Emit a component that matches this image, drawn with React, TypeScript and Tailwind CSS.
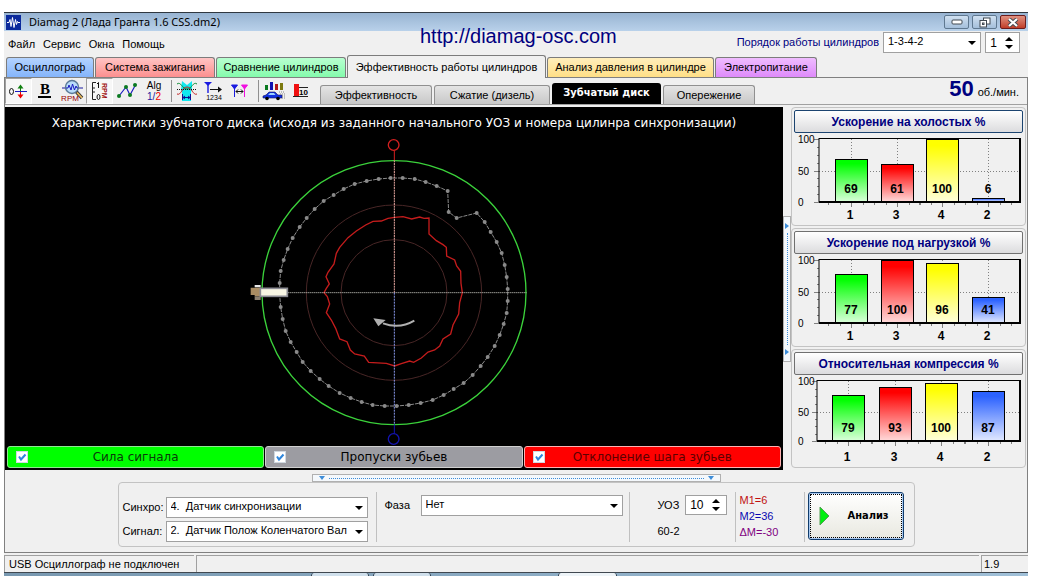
import React, { useState } from "react";

const menuItems = ["Файл", "Сервис", "Окна", "Помощь"];

const mainTabs = [
  { label: "Осциллограф", style: "w-[88px] bg-linear-to-b from-[#b4d3ff] to-[#84b4fa]" },
  { label: "Система зажигания", style: "w-[120px] bg-linear-to-b from-[#ffc4c4] to-[#fb8f8f]" },
  { label: "Сравнение цилиндров", style: "w-[130px] bg-linear-to-b from-[#b8ffd0] to-[#84fbac]" },
  { label: "Эффективность работы цилиндров", style: "w-[199px]", active: true },
  { label: "Анализ давления в цилиндре", style: "w-[167px] bg-linear-to-b from-[#ffeebb] to-[#ffdf86]" },
  { label: "Электропитание", style: "w-[102px] bg-linear-to-b from-[#efbcff] to-[#de8afa]" },
];

const discTabs = [
  { label: "Эффективность", style: "w-[112px]" },
  { label: "Сжатие (дизель)", style: "w-[116px]" },
  { label: "Зубчатый диск", style: "w-[109px]", active: true },
  { label: "Опережение", style: "w-[92px]" },
];

function WaveIcon() {
  return (
    <svg width="15" height="15" viewBox="0 0 15 15" aria-hidden="true">
      <rect width="15" height="15" fill="#0b2a9c" />
      <path d="M1 7.5h2l1-3 1 7 1.5-9 1.5 10 1.5-8 1 5 1-3 .5 1H14" stroke="#fff" fill="none" strokeWidth="1" />
    </svg>
  );
}

function OffsetIcon() {
  return (
    <svg width="22" height="22" viewBox="0 0 22 22" aria-hidden="true">
      <ellipse cx="3.5" cy="11.5" rx="2" ry="3" fill="none" stroke="#111" />
      <path d="M7 11.5h12" stroke="#1a1ac0" />
      <path d="M12.5 11V7" stroke="#108010" />
      <path d="M9.5 8.5l3-4 3 4z" fill="#108010" />
      <path d="M12.5 12v4" stroke="#e00" />
      <path d="M9.5 14.5l3 4 3-4z" fill="#e00" />
    </svg>
  );
}

function BoldIcon() {
  return (
    <svg width="22" height="22" viewBox="0 0 22 22" aria-hidden="true">
      <text x="10" y="14" textAnchor="middle" fontSize="15" fontWeight="700" fontFamily="Liberation Serif, serif">B</text>
      <path d="M3 17h13" stroke="#000" strokeWidth="2" />
    </svg>
  );
}

function RpmIcon() {
  return (
    <svg width="24" height="24" viewBox="0 0 24 24" aria-hidden="true">
      <path d="M1 9h21" stroke="#1a1aa0" />
      <circle cx="11" cy="8" r="6.5" fill="#b9dcfa" stroke="#5a7896" strokeWidth="1.4" />
      <path d="M5 9h2l1-3 2 5 1.5-6 2 6L15 7l1 2h1" stroke="#1a1ac0" fill="none" />
      <path d="M15.5 13l5.5 6" stroke="#333" strokeWidth="3.4" />
      <path d="M16 13.500l5 5.500" stroke="#e8b95c" strokeWidth="1.800" />
      <text x="9" y="22" textAnchor="middle" fontSize="8" fill="#900" fontFamily="Liberation Sans, sans-serif">RPM</text>
    </svg>
  );
}

function RangeIcon() {
  return (
    <svg width="22" height="22" viewBox="0 0 22 22" aria-hidden="true">
      <path d="M7 2.500H3.500v17H7M4 8h2M4 12h2" stroke="#222" fill="none" />
      <path d="M8 4l1.500-1.500V8" stroke="#111" fill="none" />
      <ellipse cx="9.500" cy="17" rx="1.500" ry="2.500" fill="none" stroke="#111" />
      <text transform="translate(13 3) rotate(90)" fontSize="7" fontWeight="700" fill="#a01010" fontFamily="Liberation Sans, sans-serif">RPM</text>
    </svg>
  );
}

function LinePointsIcon() {
  return (
    <svg width="22" height="22" viewBox="0 0 22 22" aria-hidden="true">
      <path d="M3 16l7-9 4 8 6-11" stroke="#1a1ac0" strokeWidth="1.200" fill="none" />
      <g fill="#0a7a20">
        <circle cx="3" cy="16" r="2" />
        <circle cx="10" cy="7" r="2" />
        <circle cx="14" cy="15" r="2" />
        <circle cx="19" cy="5" r="2" />
      </g>
    </svg>
  );
}

function AlgIcon() {
  return (
    <svg width="22" height="22" viewBox="0 0 22 22" fontFamily="Liberation Sans, sans-serif" aria-hidden="true">
      <text x="11" y="9" textAnchor="middle" fontSize="10">Alg</text>
      <text x="11" y="20" textAnchor="middle" fontSize="10" fill="#1a1aa0">
        1/<tspan fill="#e00">2</tspan>
      </text>
    </svg>
  );
}

function CompareIcon() {
  return (
    <svg width="22" height="22" viewBox="0 0 22 22" aria-hidden="true">
      <path d="M6 1l5 4 5-4v9l-1 2v9H6v-9l-1-2z" fill="#12e8f0" />
      <path d="M1 4c4-3 5 5 10 5s6-8 10-5" stroke="#0a8a30" fill="none" />
      <path d="M1 14c4 2 5-7 10-7s6 9 10 7" stroke="#c02020" fill="none" />
      <path d="M1 9.500h20" stroke="#111" strokeDasharray="1 1" />
      <path d="M6.500 14v6M14.500 14v6M7 17.500h7M9 16l-2 1.500L9 19M12 16l2 1.500-2 1.500" stroke="#101090" fill="none" />
    </svg>
  );
}

function MarkersNumberedIcon() {
  return (
    <svg width="22" height="22" viewBox="0 0 22 22" aria-hidden="true">
      <path d="M1 2h8L5 6z" fill="#1a1ae0" />
      <path d="M5 3v10" stroke="#1a1ae0" strokeWidth="1.400" />
      <path d="M7 9.500h10" stroke="#111" />
      <path d="M15 6.500l4 3-4 3z" fill="#111" />
      <text x="11" y="20" textAnchor="middle" fontSize="7" fontFamily="Liberation Sans, sans-serif">1234</text>
    </svg>
  );
}

function MarkersIcon() {
  return (
    <svg width="22" height="22" viewBox="0 0 22 22" aria-hidden="true">
      <path d="M1.500 5h6L4.500 9zM4.500 6v11" fill="#1a1ae0" stroke="#1a1ae0" />
      <path d="M11.500 5h6l-3 4zM14.500 6v11" fill="#f010e0" stroke="#f010e0" />
      <path d="M6 11.500h7M8 9.500l-2 2 2 2M11 9.500l2 2-2 2" stroke="#111" fill="none" />
    </svg>
  );
}

function CarChartIcon() {
  return (
    <svg width="24" height="22" viewBox="0 0 24 22" aria-hidden="true">
      <path d="M3 5h3v5H3z" fill="#0a7a20" />
      <path d="M8 2h3v8H8z" fill="#1010b0" />
      <path d="M13 4h3v6h-3z" fill="#b01818" />
      <path d="M18 3h3v7h-3z" fill="#7c7a10" />
      <path d="M1 16l3-1 3-3h6l3 3h4v3H1z" fill="#1030e0" stroke="#101060" strokeWidth=".6" />
      <path d="M8 13h4l1.500 2H6z" fill="#9bd0ff" />
      <circle cx="5" cy="18.500" r="1.800" />
      <circle cx="16" cy="18.500" r="1.800" />
      <path d="M17 12h5M18 14h5M20 16h3M20 18h3" stroke="#888" strokeDasharray="1 1" />
    </svg>
  );
}

function TenIcon() {
  return (
    <svg width="22" height="22" viewBox="0 0 22 22" aria-hidden="true">
      <path d="M4 4h5v12H4z" fill="#f01010" />
      <path d="M3 16.500h15M9 7.500h9" stroke="#222" />
      <text x="13.500" y="15" textAnchor="middle" fontSize="8" fontWeight="700" fontFamily="Liberation Sans, sans-serif">10</text>
    </svg>
  );
}

type Tool = { name: string; icon: () => React.JSX.Element; pressed?: boolean; separated?: boolean };

const tools: Tool[] = [
  { name: "Смещение", icon: OffsetIcon, pressed: true },
  { name: "Жирные линии", icon: BoldIcon },
  { name: "Обороты", icon: RpmIcon },
  { name: "Шкала оборотов", icon: RangeIcon, pressed: true },
  { name: "Точки", icon: LinePointsIcon },
  { name: "Алгоритм", icon: AlgIcon },
  { name: "Сравнение", icon: CompareIcon, separated: true },
  { name: "Нумерация маркеров", icon: MarkersNumberedIcon },
  { name: "Маркеры", icon: MarkersIcon },
  { name: "Диаграмма", icon: CarChartIcon, separated: true },
  { name: "Десять", icon: TenIcon },
];

function Combo({ id, options, className }: { id: string; options: string[]; className: string }) {
  return (
    <div className={"relative " + className}>
      <select id={id} className="h-full w-full appearance-none rounded-none border border-[#a0a0a0] bg-white pr-4 pb-0.5 pl-1 text-black outline-none">
        {options.map((o) => (
          <option key={o}>{o}</option>
        ))}
      </select>
      <svg className="pointer-events-none absolute inset-y-0 right-[5px] my-auto" width="8" height="4" viewBox="0 0 8 4" aria-hidden="true">
        <path d="M0 0h8L4 4z" />
      </svg>
    </div>
  );
}

function Spinner({ id, initial, label, className }: { id: string; initial: number; label?: string; className: string }) {
  const [value, setValue] = useState(initial);
  return (
    <div className={"flex items-center border border-[#a0a0a0] bg-white pr-1.5 text-xs " + className}>
      <input
        id={id}
        type="number"
        aria-label={label}
        value={value}
        onChange={(e) => setValue(Number(e.target.value))}
        className="w-0 min-w-0 flex-1 [appearance:textfield] bg-transparent pr-2 text-right outline-none [&::-webkit-inner-spin-button]:appearance-none"
      />
      <div className="flex flex-col gap-1">
        <button aria-label="Больше" onClick={() => setValue(value + 1)}>
          <svg className="block" width="8" height="4" viewBox="0 0 8 4"><path d="M0 4h8L4 0z" /></svg>
        </button>
        <button aria-label="Меньше" onClick={() => setValue(value - 1)}>
          <svg className="block" width="8" height="4" viewBox="0 0 8 4"><path d="M0 0h8L4 4z" /></svg>
        </button>
      </div>
    </div>
  );
}

const teeth: [number, number][] = [
  [120, 519], [123, 483], [132, 450], [144, 417], [159, 384], [180, 351], [201, 324], [225, 297], [252, 273], [282, 255],
  [312, 237], [345, 222], [381, 213], [417, 207], [453, 204], [489, 204], [525, 207], [558, 216], [591, 228], [624, 243],
  [627, 306], [651, 324], [711, 309], [735, 336], [753, 366], [771, 396], [786, 429], [795, 465], [801, 501], [804, 537],
  [804, 573], [801, 609], [792, 642], [780, 675], [765, 708], [744, 741], [723, 768], [699, 795], [672, 819], [642, 837],
  [612, 855], [579, 870], [543, 879], [507, 885], [471, 888], [435, 888], [399, 885], [366, 876], [333, 864], [300, 849],
  [267, 828], [240, 807], [213, 783], [189, 756], [171, 726], [153, 696], [138, 663], [129, 627], [123, 591], [120, 555],
];

const deviation: [number, number][] = [
  [465, 322], [490, 320], [516, 327], [540, 321], [553, 325], [568, 324], [568, 372], [590, 392], [610, 404], [620, 412],
  [621, 438], [645, 450], [651, 468], [663, 484], [664, 520], [668, 548], [660, 578], [657, 612], [640, 645], [633, 672],
  [610, 687], [600, 708], [585, 720], [565, 726], [545, 744], [522, 757], [510, 753], [485, 761], [465, 768], [440, 760],
  [387, 757], [374, 738], [345, 732], [332, 720], [322, 695], [300, 687], [288, 655], [275, 630], [260, 608], [270, 582],
  [263, 560], [253, 548], [260, 535], [269, 522], [259, 500], [265, 487], [283, 462], [290, 430], [300, 412], [325, 383],
  [350, 363], [378, 345], [400, 334], [425, 333], [445, 325],
];

const toPoints = (pts: [number, number][]) => pts.map((p) => p.join(",")).join(" ");

function ToothedDisc() {
  return (
    <svg className="mx-auto block" width="300" height="308" viewBox="13 84 900 924" fill="none" strokeWidth="3" role="img" aria-label="Зубчатый диск">
      <circle cx="463" cy="548" r="263" stroke="#482626" />
      <circle cx="463" cy="548" r="159" stroke="#482626" />
      <circle cx="463" cy="548" r="396" stroke="#3bd23b" strokeWidth="4" />
      <polygon points={toPoints(teeth)} stroke="#8a8a8a" strokeDasharray="12 3" />
      {teeth.map(([x, y]) => (
        <circle key={x + "-" + y} cx={x} cy={y} r="6" fill="#8a8a8a" />
      ))}
      <polygon points={toPoints(deviation)} stroke="#c41c1c" strokeWidth="4" />
      <path d="M144 548H860" stroke="#e0e0d8" strokeDasharray="3 3" />
      <path d="M464 151V548" stroke="#e8a8a0" strokeDasharray="6 2" />
      <path d="M464 548V943" stroke="#8c9cf0" strokeDasharray="6 3" />
      <circle cx="462" cy="105" r="16" stroke="#d42020" strokeWidth="4" />
      <path d="M464 121V151" stroke="#d42020" />
      <circle cx="462" cy="987" r="16" stroke="#1414b0" strokeWidth="4" />
      <path d="M464 943V971" stroke="#1414b0" />
      <path d="M524 632Q480 658 430 640" stroke="#b0b0b0" strokeWidth="6" />
      <path d="M401 625L438 630L416 649z" fill="#b0b0b0" />
      <path d="M45 525h18v7H45z" fill="#e8e8e8" />
      <path d="M33 533h30v26H45v-4H33z" fill="#a98c62" />
      <path d="M45 559h18v11H45z" fill="#8c8070" />
      <rect x="62" y="535" width="81" height="24" fill="#f8f6e4" stroke="#8c8c94" strokeWidth="5" />
    </svg>
  );
}

const legend = [
  { id: "signal", label: "Сила сигнала", style: "bg-[#00ff00] border-[#90e890] text-[#0a3a0a]" },
  { id: "gaps", label: "Пропуски зубьев", style: "bg-[#9c9ca2] border-[#d0d0d0] text-black" },
  { id: "pitch", label: "Отклонение шага зубьев", style: "bg-[#ff0000] border-[#ffb0b0] text-[#5c0000]" },
];

function LegendToggle({ id, label, style }: { id: string; label: string; style: string }) {
  const [on, setOn] = useState(true);
  return (
    <label htmlFor={id} className={"flex h-[22px] flex-1 items-center rounded-[3px] border pl-2 " + style}>
      <span className="relative flex">
        <input
          id={id}
          type="checkbox"
          checked={on}
          onChange={() => setOn(!on)}
          className="size-3 appearance-none border border-[#d0d8e0] bg-white"
        />
        {on && (
          <svg className="pointer-events-none absolute inset-0" width="12" height="12" viewBox="0 0 12 12" aria-hidden="true">
            <path d="M3 5.500l2 3 4.500-5" stroke="#2f86dc" strokeWidth="2" fill="none" />
          </svg>
        )}
      </span>
      <span className="flex-1 pr-5 text-center text-xs">{label}</span>
    </label>
  );
}

const barFills = ["#00ff00", "#ff0000", "#ffff00", "#2c62ff"];
const cylinders = ["1", "3", "4", "2"];

type BarChartData = { title: string; values: number[]; left: number; bottom: number; top: number; full: number; centers: number[]; focused?: boolean };

const charts: BarChartData[] = [
  { title: "Ускорение на холостых %", values: [69, 61, 100, 6], left: 25, top: 6, full: 6, bottom: 69, centers: [57, 103, 148, 194], focused: true },
  { title: "Ускорение под нагрузкой %", values: [77, 100, 96, 41], left: 25, top: 6, full: 6, bottom: 69, centers: [57, 103, 148, 194] },
  { title: "Относительная компрессия %", values: [79, 93, 100, 87], left: 23, top: 6, full: 8, bottom: 66, centers: [54, 101, 147, 194] },
];

function BarChart({ data, index }: { data: BarChartData; index: number }) {
  const { values, left, bottom, top, full, centers } = data;
  const yFor = (v: number) => Math.round(bottom - (v / 100) * (bottom - full));
  const mid = yFor(50);
  return (
    <section className="rounded-[4px] border border-[#c3c3c3] px-0.5 pt-0.5 pb-px">
      <button
        className={
          "block h-[23px] w-full rounded-[2px] border bg-linear-to-b from-white to-[#dcdcde] text-center font-['Liberation_Sans',sans-serif] text-xs font-bold text-[#000080] " +
          (data.focused ? "border-[#1c4470]" : "border-[#707070]")
        }
      >
        {data.title}
      </button>
      <svg className="block h-[91px] w-full" viewBox="0 0 229 91" fontFamily="Liberation Sans, sans-serif" role="img" aria-label={data.title}>
        <defs>
          {barFills.map((c, i) => (
            <linearGradient key={c} id={"bar-" + index + "-" + i} x1="0" y1="0" x2="0" y2="1">
              <stop offset="0.1" stopColor={c} />
              <stop offset="1" stopColor={c} stopOpacity="0.15" />
            </linearGradient>
          ))}
        </defs>
        <g stroke="#808080" strokeDasharray="1 2">
          <path d={"M" + left + " " + (mid + 0.5) + "H226"} />
          {centers.map((c) => (
            <path key={c} d={"M" + (c + 0.5) + " " + top + "V" + bottom} />
          ))}
        </g>
        <path
          stroke="#808080"
          d={
            [top, mid, bottom].map((y) => "M" + (left - 5) + " " + (y + 0.5) + "h5").join("") +
            [0.125, 0.25, 0.375, 0.625, 0.75, 0.875].map((f) => "M" + (left - 2) + " " + (Math.round(bottom - f * (bottom - top)) + 0.5) + "h2").join("") +
            centers.map((c) => "M" + (c + 0.5) + " " + bottom + "v5M" + (c - 10.5) + " " + bottom + "v3M" + (c - 22.5) + " " + bottom + "v3M" + (c + 12.5) + " " + bottom + "v3M" + (c + 23.5) + " " + bottom + "v3").join("")
          }
        />
        {values.map((v, i) => (
          <g key={i}>
            <rect x={centers[i] - 15.5} y={yFor(v) + 0.5} width="32" height={bottom - yFor(v) - 1} fill="#fff" />
            <rect x={centers[i] - 15.5} y={yFor(v) + 0.5} width="32" height={bottom - yFor(v) - 1} fill={"url(#bar-" + index + "-" + i + ")"} stroke="#000" />
            <text x={centers[i]} y={bottom - 9} textAnchor="middle" fontSize="12" fontWeight="700">{v}</text>
            <text x={centers[i] - 1} y="86" textAnchor="middle" fontSize="12" fontWeight="700">{cylinders[i]}</text>
          </g>
        ))}
        <path d={"M" + left + " " + (top - 0.5) + "H226.500M" + left + " " + (top - 1) + "V" + bottom} stroke="#000" fill="none" />
        <path d={"M" + left + " " + bottom + "H226V" + (top - 1)} stroke="#000" strokeWidth="2" fill="none" />
        <g fontSize="10">
          <text x="4" y="10">100</text>
          <text x="4" y={mid + 4}>50</text>
          <text x="4" y={bottom + 4}>0</text>
        </g>
      </svg>
    </section>
  );
}

function Arrow({ vertical }: { vertical?: boolean }) {
  return (
    <svg className="block shrink-0" width="6" height="6" viewBox="0 0 6 6" aria-hidden="true">
      <path d={vertical ? "M1 0v6l4-3z" : "M0 1h6L3 5z"} fill="#3c8cd8" />
    </svg>
  );
}

function Divider() {
  return <div className="w-px self-stretch bg-[#c0c0c0]" />;
}

export default function App() {
  return (
    <div className="flex min-h-screen flex-col bg-white pt-3 pr-3 pl-1 font-['Liberation_Sans',sans-serif] text-[11px] text-black">
      <div className="relative flex flex-1 flex-col bg-[#f0f0f0]">
        <header className="flex h-[19px] items-center border-t border-[#303840] bg-linear-to-b from-[#98b4d2] to-[#b9d1ea] pr-0.5 pl-0.5">
          <WaveIcon />
          <h1 className="flex-1 pl-2 font-['Noto_Sans',sans-serif]">Diamag 2 (Лада Гранта 1.6 CSS.dm2)</h1>
          <div className="flex gap-[3px]">
            <button aria-label="Свернуть" className="flex h-[14px] w-[25px] items-center justify-center rounded-[2px] border border-[#5f7890] bg-linear-to-b from-[#d0e0f0] to-[#a4bfdb]">
              <svg width="12" height="6" viewBox="0 0 12 6"><rect x="1" y="1" width="10" height="4" rx="1" fill="#fff" stroke="#404850" /></svg>
            </button>
            <button aria-label="Развернуть" className="flex h-[14px] w-[25px] items-center justify-center rounded-[2px] border border-[#5f7890] bg-linear-to-b from-[#d0e0f0] to-[#a4bfdb]">
              <svg width="12" height="11" viewBox="0 0 12 11" fill="#fff" stroke="#404850">
                <rect x="4.500" y="1" width="6.500" height="6" />
                <rect x="1" y="3.500" width="6.500" height="6.500" />
                <rect x="3.500" y="6" width="1.500" height="1.500" />
              </svg>
            </button>
            <button aria-label="Закрыть" className="flex h-[14px] w-[26px] items-center justify-center rounded-[2px] border border-[#6c1c1c] bg-linear-to-b from-[#e09080] to-[#c03c28]">
              <svg width="12" height="9" viewBox="0 0 12 9"><path d="M2 1l8 7M10 1L2 8" stroke="#404850" strokeWidth="4" /><path d="M2 1l8 7M10 1L2 8" stroke="#fff" strokeWidth="2.200" /></svg>
            </button>
          </div>
        </header>

        <a href="http://diamag-osc.com" className="absolute top-3 left-[416px] text-xl leading-6 text-[#000080]">http://diamag-osc.com</a>

        <div className="flex h-[23px] items-center pr-2 pl-1">
          <nav className="flex flex-1 gap-2 pt-1">
            {menuItems.map((m) => (
              <button key={m}>{m}</button>
            ))}
          </nav>
          <label htmlFor="order" className="mr-1 text-[#000080]">Порядок работы цилиндров</label>
          <Combo id="order" options={["1-3-4-2", "1-2-4-3"]} className="mr-1 h-[21px] w-[98px]" />
          <Spinner id="cylinder" initial={1} label="Цилиндр" className="h-[21px] w-[35px]" />
        </div>

        <nav className="flex h-[24px] items-end gap-px border-b border-[#808080] pl-0.5">
          {mainTabs.map((t) => (
            <button
              key={t.label}
              className={
                "shrink-0 rounded-t-[3px] border border-[#7c7c7c] text-center whitespace-nowrap " +
                t.style +
                (t.active ? " -mb-px h-[23px] border-b-0 bg-[#f0f0f0]" : " h-[20px] border-b-0")
              }
            >
              {t.label}
            </button>
          ))}
        </nav>

        <div className="flex flex-1 flex-col border-x border-b border-[#808080]">
          <div className="flex h-[27px] items-end border-b border-[#a0a0a0]">
            <div className="flex h-full items-center" role="toolbar" aria-label="Инструменты">
              {tools.map(({ name, icon: Icon, pressed, separated }) => (
                <React.Fragment key={name}>
                  {separated && <div className="mr-px ml-1 h-[22px] w-px bg-[#909090]" />}
                  <button
                    aria-label={name}
                    aria-pressed={pressed}
                    className={"flex h-[26px] w-[27px] items-center justify-center " + (pressed ? "border border-t-[#a0a0a0] border-r-white border-b-white border-l-[#a0a0a0] bg-[#f7f7f7]" : "")}
                  >
                    <Icon />
                  </button>
                </React.Fragment>
              ))}
            </div>
            <nav className="flex flex-1 items-end gap-0.5 pl-1.5">
              {discTabs.map((t) => (
                <button
                  key={t.label}
                  className={
                    "shrink-0 rounded-t-[3px] text-center whitespace-nowrap " +
                    t.style +
                    (t.active
                      ? " h-[21px] bg-black font-['DejaVu_Sans_Condensed',sans-serif] font-bold text-white"
                      : " h-[19px] border border-b-0 border-[#909090] bg-linear-to-b from-[#e4e4e4] to-[#c8c8c8]")
                  }
                >
                  {t.label}
                </button>
              ))}
            </nav>
            <p className="flex items-baseline gap-1 pr-2 leading-6">
              <strong className="text-[22px] text-[#000080]">50</strong>
              <span>об./мин.</span>
            </p>
          </div>

          <main className="flex pt-0.5 pr-px">
            <section className="flex min-w-0 flex-1 flex-col bg-black px-0.5 pb-0.5">
              <h2 className="pt-2 pb-1.5 text-center font-['DejaVu_Sans',sans-serif] text-xs leading-[17px] text-white">
                Характеристики зубчатого диска (исходя из заданного начального УОЗ и номера цилинра синхронизации)
              </h2>
              <ToothedDisc />
              <div className="mt-auto flex gap-px font-['DejaVu_Sans',sans-serif]">
                {legend.map((l) => (
                  <LegendToggle key={l.id} {...l} />
                ))}
              </div>
            </section>
            <div className="flex w-[8px] flex-col justify-center">
              <div className="flex h-[146px] flex-col items-center justify-between border border-[#b0b0b0] bg-[#f4f8fc] py-1.5">
                <Arrow vertical />
                <div className="my-1 flex-1 border-l border-dotted border-[#3c8cd8]" />
                <Arrow vertical />
              </div>
            </div>
            <aside className="flex w-[235px] flex-col gap-[2px]">
              {charts.map((c, i) => (
                <BarChart key={c.title} data={c} index={i} />
              ))}
            </aside>
          </main>

          <div className="flex flex-1 flex-col items-center pt-1 pb-1">
            <div className="flex h-[8px] w-[409px] items-center border border-[#b0b0b0] bg-[#f4f8fc] px-1.5">
              <Arrow />
              <div className="mx-1 flex-1 border-t border-dotted border-[#3c8cd8]" />
              <Arrow />
            </div>
            <form className="flex h-[65px] w-[797px] items-start rounded-[4px] border border-[#c3c3c3] px-1 pt-[9px] pb-1" onSubmit={(e) => e.preventDefault()}>
              <div className="mt-[5px] mr-2 grid grid-cols-[43px_202px] items-center gap-y-[3px]">
                <label htmlFor="sync">Синхро:</label>
                <Combo id="sync" options={["4.\u00a0\u00a0Датчик синхронизации"]} className="h-[21px]" />
                <label htmlFor="signal-source">Сигнал:</label>
                <Combo id="signal-source" options={["2.\u00a0\u00a0Датчик Полож Коленчатого Вал"]} className="h-[21px]" />
              </div>
              <Divider />
              <div className="mt-[3px] mr-1.5 ml-2 flex items-center">
                <label htmlFor="phase" className="w-[36px]">Фаза</label>
                <Combo id="phase" options={["Нет"]} className="h-[21px] w-[202px]" />
              </div>
              <Divider />
              <div className="mt-[3px] mr-2 ml-7 flex flex-col gap-2">
                <div className="flex items-center">
                  <label htmlFor="advance" className="w-[27px]">УОЗ</label>
                  <Spinner id="advance" initial={10} className="h-[20px] w-[42px]" />
                </div>
                <span>60-2</span>
              </div>
              <Divider />
              <div className="ml-1 w-[64px] leading-4">
                <p className="text-[#c01010]">М1=6</p>
                <p className="text-[#0808b0]">М2=36</p>
                <p className="text-[#800080]">ΔМ=-30</p>
              </div>
              <Divider />
              <button
                type="submit"
                className="ml-[3px] flex h-[48px] w-[96px] items-center rounded-[3px] border border-[#103c6c] bg-linear-to-b from-white to-[#e8e8e0] p-px shadow-[inset_0_0_0_1px_#a8c8f0]"
              >
                <span className="flex h-full w-full items-center gap-[18px] border border-dotted border-black pl-2 font-['DejaVu_Sans_Condensed',sans-serif] font-bold">
                  <svg width="11" height="20" viewBox="0 0 11 20" aria-hidden="true"><path d="M1 1v18l9-9z" fill="#00f010" stroke="#50a050" /></svg>
                  Анализ
                </span>
              </button>
            </form>
          </div>
        </div>

        <footer className="mt-0.5 flex h-[17px] gap-0.5 leading-4">
          <span className="w-[190px] border-t border-l border-[#a0a0a0] pl-1 whitespace-nowrap">USB Осциллограф не подключен</span>
          <span className="flex-1 border-t border-l border-[#a0a0a0]" />
          <span className="w-[47px] border-t border-l border-[#a0a0a0] pl-0.5">1.9</span>
        </footer>
      </div>
      <div className="flex h-1 border-t border-[#404850] bg-linear-to-r from-[#7898b0] to-[#a0c0d8]">
        <div className="ml-[307px] w-[58px] rounded-t-sm border-x border-[#304050] bg-[#d0e0ec]" />
        <div className="ml-1 w-[58px] rounded-t-sm border-x border-[#304050] bg-[#d0e0ec]" />
        <div className="ml-[127px] w-[59px] rounded-t-sm border-x border-[#304050] bg-[#eef4f8]" />
      </div>
    </div>
  );
}
